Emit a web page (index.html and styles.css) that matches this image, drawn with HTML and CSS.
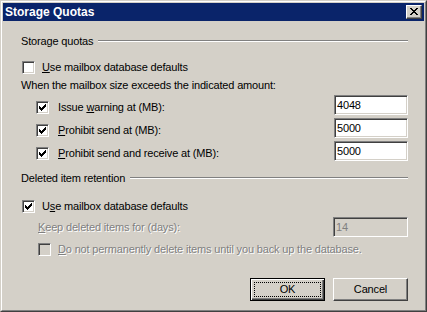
FILE: index.html
```html
<!DOCTYPE html>
<html lang="en">
<head>
    <meta charset="UTF-8">
    <title>Storage Quotas</title>
    <link rel="stylesheet" href="styles.css">
</head>
<body>
    <div class="window">
        <div class="frame">
            <div class="titlebar">
                <span class="title">Storage Quotas</span>
                <div class="close-btn">
                    <svg width="8" height="7" viewBox="0 0 8 7" shape-rendering="crispEdges">
                        <path d="M0 0h2v1h-2z M6 0h2v1h-2z M1 1h2v1h-2z M5 1h2v1h-2z M2 2h4v1h-4z M3 3h2v1h-2z M2 4h4v1h-4z M1 5h2v1h-2z M5 5h2v1h-2z M0 6h2v1h-2z M6 6h2v1h-2z" fill="#000"/>
                    </svg>
                </div>
            </div>
            <div class="content">
                <div class="group-head">
                    <span>Storage quotas</span>
                    <div class="etched"></div>
                </div>
                <div class="check-row first-check">
                    <span class="checkbox"></span>
                    <span><u>U</u>se mailbox database defaults</span>
                </div>
                <div class="desc">When the mailbox size exceeds the indicated amount:</div>
                <div class="quota-row">
                    <div class="check-row sub-check">
                        <span class="checkbox checked"></span>
                        <span>Issue <u>w</u>arning at (MB):</span>
                    </div>
                    <div class="textbox">4048</div>
                </div>
                <div class="quota-row">
                    <div class="check-row sub-check">
                        <span class="checkbox checked"></span>
                        <span><u>P</u>rohibit send at (MB):</span>
                    </div>
                    <div class="textbox">5000</div>
                </div>
                <div class="quota-row">
                    <div class="check-row sub-check">
                        <span class="checkbox checked"></span>
                        <span><u>P</u>rohibit send and receive at (MB):</span>
                    </div>
                    <div class="textbox">5000</div>
                </div>

                <div class="group-head second-head">
                    <span>Deleted item retention</span>
                    <div class="etched"></div>
                </div>
                <div class="check-row retention-check">
                    <span class="checkbox checked"></span>
                    <span>U<u>s</u>e mailbox database defaults</span>
                </div>
                <div class="keep-row">
                    <span class="disabled-text"><u>K</u>eep deleted items for (days):</span>
                    <div class="textbox disabled">14</div>
                </div>
                <div class="check-row backup-check">
                    <span class="checkbox disabled"></span>
                    <span class="disabled-text"><u>D</u>o not permanently delete items until you back up the database.</span>
                </div>

                <div class="dialog-buttons">
                    <div class="push-btn default-btn"><span class="focus-rect">OK</span></div>
                    <div class="push-btn">Cancel</div>
                </div>
            </div>
        </div>
    </div>
</body>
</html>
```

FILE: styles.css
```css
* {
    box-sizing: border-box;
    margin: 0;
    padding: 0;
}
body {
    background-color: #d4d0c8;
    font-family: "Liberation Sans", Arial, sans-serif;
    font-size: 11px;
    line-height: 13px;
    letter-spacing: -0.16px;
    color: #000;
}
.window {
    width: 427px;
    height: 312px;
    border: 1px solid;
    border-color: #d4d0c8 #404040 #404040 #d4d0c8;
}
.frame {
    height: 100%;
    padding: 1px;
    border: 1px solid;
    border-color: #fff #808080 #808080 #fff;
    display: flex;
    flex-direction: column;
}
.titlebar {
    height: 18px;
    padding: 0 2px;
    background-color: #0a246a;
    display: flex;
    justify-content: space-between;
    align-items: center;
}
.title {
    color: #fff;
    font-weight: bold;
    font-size: 12px;
    letter-spacing: 0;
}
.close-btn {
    width: 16px;
    height: 14px;
    background-color: #d4d0c8;
    border: 1px solid;
    border-color: #fff #404040 #404040 #fff;
    box-shadow: inset -1px -1px 0 #808080;
    display: flex;
    justify-content: center;
    align-items: center;
    padding: 0 1px 1px 0;
}
.close-btn svg {
    display: block;
}
.content {
    flex: 1;
    padding: 13px 16px 0 18px;
    display: flex;
    flex-direction: column;
}
.group-head {
    height: 14px;
    display: flex;
    align-items: center;
    gap: 5px;
}
.etched {
    flex: 1;
    height: 2px;
    border-top: 1px solid #808080;
    border-bottom: 1px solid #fff;
}
.second-head {
    margin-top: 10px;
}
.check-row {
    height: 13px;
    display: flex;
    align-items: center;
}
.checkbox {
    width: 13px;
    height: 13px;
    flex-shrink: 0;
    background-color: #fff;
    border: 1px solid;
    border-color: #808080 #fff #fff #808080;
    box-shadow: inset 1px 1px 0 #404040, inset -1px -1px 0 #d4d0c8;
}
.checkbox.checked {
    background-image: url("data:image/svg+xml,%3Csvg xmlns='http://www.w3.org/2000/svg' width='7' height='7' shape-rendering='crispEdges'%3E%3Cpath d='M0 2h1v3h-1z M1 3h1v3h-1z M2 4h1v3h-1z M3 3h1v3h-1z M4 2h1v3h-1z M5 1h1v3h-1z M6 0h1v3h-1z' fill='%23000'/%3E%3C/svg%3E");
    background-repeat: no-repeat;
    background-position: 2px 2px;
}
.checkbox.disabled {
    background-color: #d4d0c8;
}
.first-check {
    margin-top: 13px;
    margin-left: 1px;
    gap: 7px;
}
.desc {
    margin-top: 5px;
}
.quota-row {
    height: 20px;
    margin-top: 3px;
    display: flex;
    justify-content: space-between;
    align-items: flex-start;
}
.sub-check {
    margin-top: 6px;
    margin-left: 15px;
    gap: 9px;
}
.textbox {
    width: 74px;
    height: 20px;
    padding: 0 2px;
    background-color: #fff;
    border: 1px solid;
    border-color: #808080 #fff #fff #808080;
    box-shadow: inset 1px 1px 0 #404040, inset -1px -1px 0 #d4d0c8;
    display: flex;
    align-items: center;
}
.textbox.disabled {
    width: 75px;
    background-color: #d4d0c8;
    color: #808080;
}
.retention-check {
    margin-top: 15px;
    margin-left: 1px;
    gap: 7px;
}
.keep-row {
    height: 20px;
    margin-top: 4px;
    padding-left: 17px;
    display: flex;
    justify-content: space-between;
    align-items: center;
}
.disabled-text {
    color: #808080;
    text-shadow: 1px 1px 0 #fff;
}
.backup-check {
    margin-top: 6px;
    margin-left: 17px;
    gap: 7px;
}
.dialog-buttons {
    margin-top: 22px;
    display: flex;
    justify-content: flex-end;
    gap: 8px;
}
.push-btn {
    width: 75px;
    height: 23px;
    border: 1px solid;
    border-color: #fff #404040 #404040 #fff;
    box-shadow: inset -1px -1px 0 #808080;
    display: flex;
    justify-content: center;
    align-items: center;
}
.default-btn {
    border: 1px solid #000;
    box-shadow: inset 1px 1px 0 #fff, inset -1px -1px 0 #404040, inset -2px -2px 0 #808080;
    padding: 3px;
}
.focus-rect {
    width: 100%;
    height: 100%;
    border: 1px dotted #000;
    display: flex;
    justify-content: center;
    align-items: center;
}
```
